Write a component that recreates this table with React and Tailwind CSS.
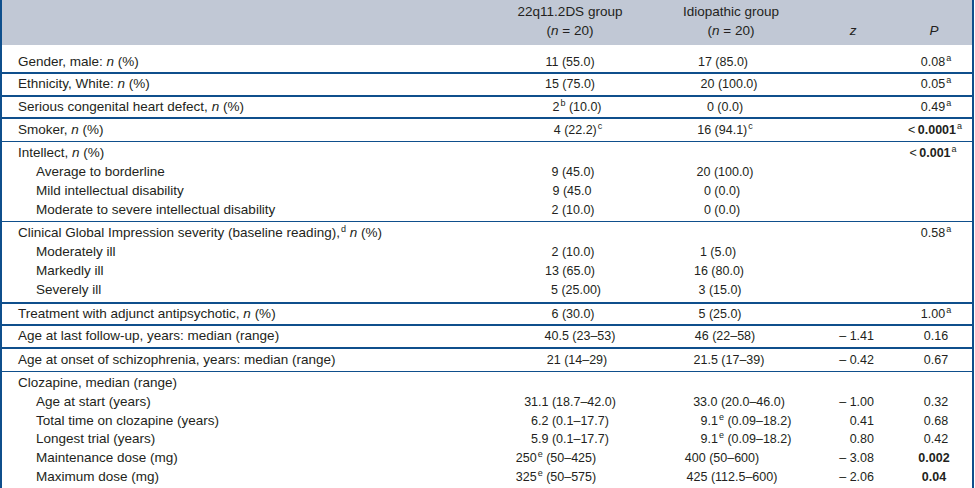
import React from "react";

const font = { fontFamily: '"Liberation Sans", Arial, sans-serif' };

function Sup({ children }) {
  return <sup className="text-[9px] -top-[5px] ml-[1px]">{children}</sup>;
}

const rows = [
  {
    label: <>Gender, male: <i>n</i> (%)</>,
    a: "11 (55.0)",
    b: "17 (85.0)",
    bPad: "pr-[12px]",
    p: <>0.08<Sup>a</Sup></>,
    line: "border-b-2 pt-[8px]",
  },
  {
    label: <>Ethnicity, White: <i>n</i> (%)</>,
    a: "15 (75.0)",
    b: "20 (100.0)",
    p: <>0.05<Sup>a</Sup></>,
    line: "border-b-2 py-[1px]",
  },
  {
    label: <>Serious congenital heart defect, <i>n</i> (%)</>,
    a: <>2<Sup>b</Sup> (10.0)</>,
    aPad: "pl-[14px]",
    b: "0 (0.0)",
    bPad: "pr-[8px]",
    p: <>0.49<Sup>a</Sup></>,
    line: "border-b-2 py-[1px]",
  },
  {
    label: <>Smoker, <i>n</i> (%)</>,
    a: <>4 (22.2)<Sup>c</Sup></>,
    aPad: "pl-[16px]",
    b: <>16 (94.1)<Sup>c</Sup></>,
    bPad: "pr-[8px]",
    p: <>&lt;&thinsp;<b>0.0001</b><Sup>a</Sup></>,
    pPad: "pr-[2px]",
    line: "border-b py-[1.5px]",
  },
  {
    label: <>Intellect, <i>n</i> (%)</>,
    p: <>&lt;&thinsp;<b>0.001</b><Sup>a</Sup></>,
    pPad: "pr-[6px]",
    line: "border-b py-[2px]",
    subs: [
      { label: "Average to borderline", a: "9 (45.0)", aPad: "pl-[6px]", b: "20 (100.0)", bPad: "pr-[8px]" },
      { label: "Mild intellectual disability", a: "9 (45.0", aPad: "pl-[4px]", b: "0 (0.0)", bPad: "pr-[14px]" },
      { label: "Moderate to severe intellectual disability", a: "2 (10.0)", aPad: "pl-[6px]", b: "0 (0.0)", bPad: "pr-[14px]" },
    ],
  },
  {
    label: <>Clinical Global Impression severity (baseline reading),<Sup>d</Sup> <i>n</i> (%)</>,
    p: <>0.58<Sup>a</Sup></>,
    line: "border-b-2 py-[2px]",
    subs: [
      { label: "Moderately ill", a: "2 (10.0)", aPad: "pl-[6px]", b: "1 (5.0)", bPad: "pr-[22px]" },
      { label: "Markedly ill", a: "13 (65.0)", b: "16 (80.0)", bPad: "pr-[20px]" },
      { label: "Severely ill", a: "5 (25.00)", aPad: "pl-[12px]", b: "3 (15.0)", bPad: "pr-[18px]" },
    ],
  },
  {
    label: <>Treatment with adjunct antipsychotic, <i>n</i> (%)</>,
    a: "6 (30.0)",
    aPad: "pl-[6px]",
    b: "5 (25.0)",
    bPad: "pr-[18px]",
    p: <>1.00<Sup>a</Sup></>,
    line: "border-b-2 py-[1px]",
  },
  {
    label: "Age at last follow-up, years: median (range)",
    a: "40.5 (23–53)",
    aPad: "pl-[20px]",
    b: "46 (22–58)",
    bPad: "pr-[8px]",
    z: "– 1.41",
    p: "0.16",
    line: "border-b-2 py-[1px]",
  },
  {
    label: "Age at onset of schizophrenia, years: median (range)",
    a: "21 (14–29)",
    aPad: "pl-[14px]",
    b: "21.5 (17–39)",
    z: "– 0.42",
    p: "0.67",
    line: "border-b py-[1.5px]",
  },
  {
    label: "Clozapine, median (range)",
    line: "pt-[2px]",
    subs: [
      { label: "Age at start (years)", a: "31.1 (18.7–42.0)", b: "33.0 (20.0–46.0)", bPad: "pl-[20px]", z: "– 1.00", p: "0.32" },
      { label: "Total time on clozapine (years)", a: "6.2 (0.1–17.7)", b: <>9.1<Sup>e</Sup> (0.09–18.2)</>, bPad: "pl-[34px]", z: "0.41", p: "0.68" },
      { label: "Longest trial (years)", a: "5.9 (0.1–17.7)", b: <>9.1<Sup>e</Sup> (0.09–18.2)</>, bPad: "pl-[34px]", z: "0.80", p: "0.42" },
      { label: "Maintenance dose (mg)", a: <>250<Sup>e</Sup> (50–425)</>, aPad: "pr-[28px]", b: "400 (50–600)", bPad: "pr-[14px]", z: "– 3.08", p: <b>0.002</b>, pPad: "pr-[4px]" },
      { label: "Maximum dose (mg)", a: <>325<Sup>e</Sup> (50–575)</>, aPad: "pr-[28px]", b: "425 (112.5–600)", bPad: "pl-[6px]", z: "– 2.06", p: <b>0.04</b>, pPad: "pr-[4px]" },
    ],
  },
];

function Line({ label, sub, a, aPad, b, bPad, z, p, pPad }) {
  return (
    <div className="grid grid-cols-[490px_156px_162px_90px_1fr] leading-[18.8px]">
      <div className={"whitespace-nowrap " + (sub ? "pl-[34px]" : "pl-[16px]")}>{label}</div>
      <div className={"text-center text-[12.5px] whitespace-nowrap " + (aPad || "")}>{a}</div>
      <div className={"text-center text-[12.5px] whitespace-nowrap " + (bPad || "")}>{b}</div>
      <div className="text-right text-[12.5px] pr-[26px] whitespace-nowrap">{z}</div>
      <div className={"text-center text-[12.5px] whitespace-nowrap " + (pPad || "")}>{p}</div>
    </div>
  );
}

export default function App() {
  return (
    <div style={font} className="w-[974px] h-[488px] overflow-hidden bg-white text-[13.5px] text-[#231f20] border-x-2 border-[#0f4f8c]">
      <div className="bg-[#c1c8d5] h-[45px] pt-[3px] grid grid-cols-[490px_156px_162px_90px_1fr] leading-[18.7px]">
        <div></div>
        <div className="text-center">
          <div>22q11.2DS group</div>
          <div>(<i>n</i> = 20)</div>
        </div>
        <div className="text-center pl-[4px]">
          <div>Idiopathic group</div>
          <div>(<i>n</i> = 20)</div>
        </div>
        <div className="pt-[18.7px] text-center pr-[4px]"><i>z</i></div>
        <div className="pt-[18.7px] text-center pr-[4px]"><i>P</i></div>
      </div>
      {rows.map((r, i) => (
        <div key={i} className={"border-[#0f4f8c] " + r.line}>
          <Line label={r.label} a={r.a} aPad={r.aPad} b={r.b} bPad={r.bPad} z={r.z} p={r.p} pPad={r.pPad} />
          {r.subs &&
            r.subs.map((s, j) => (
              <Line key={j} sub label={s.label} a={s.a} aPad={s.aPad} b={s.b} bPad={s.bPad} z={s.z} p={s.p} pPad={s.pPad} />
            ))}
        </div>
      ))}
    </div>
  );
}
